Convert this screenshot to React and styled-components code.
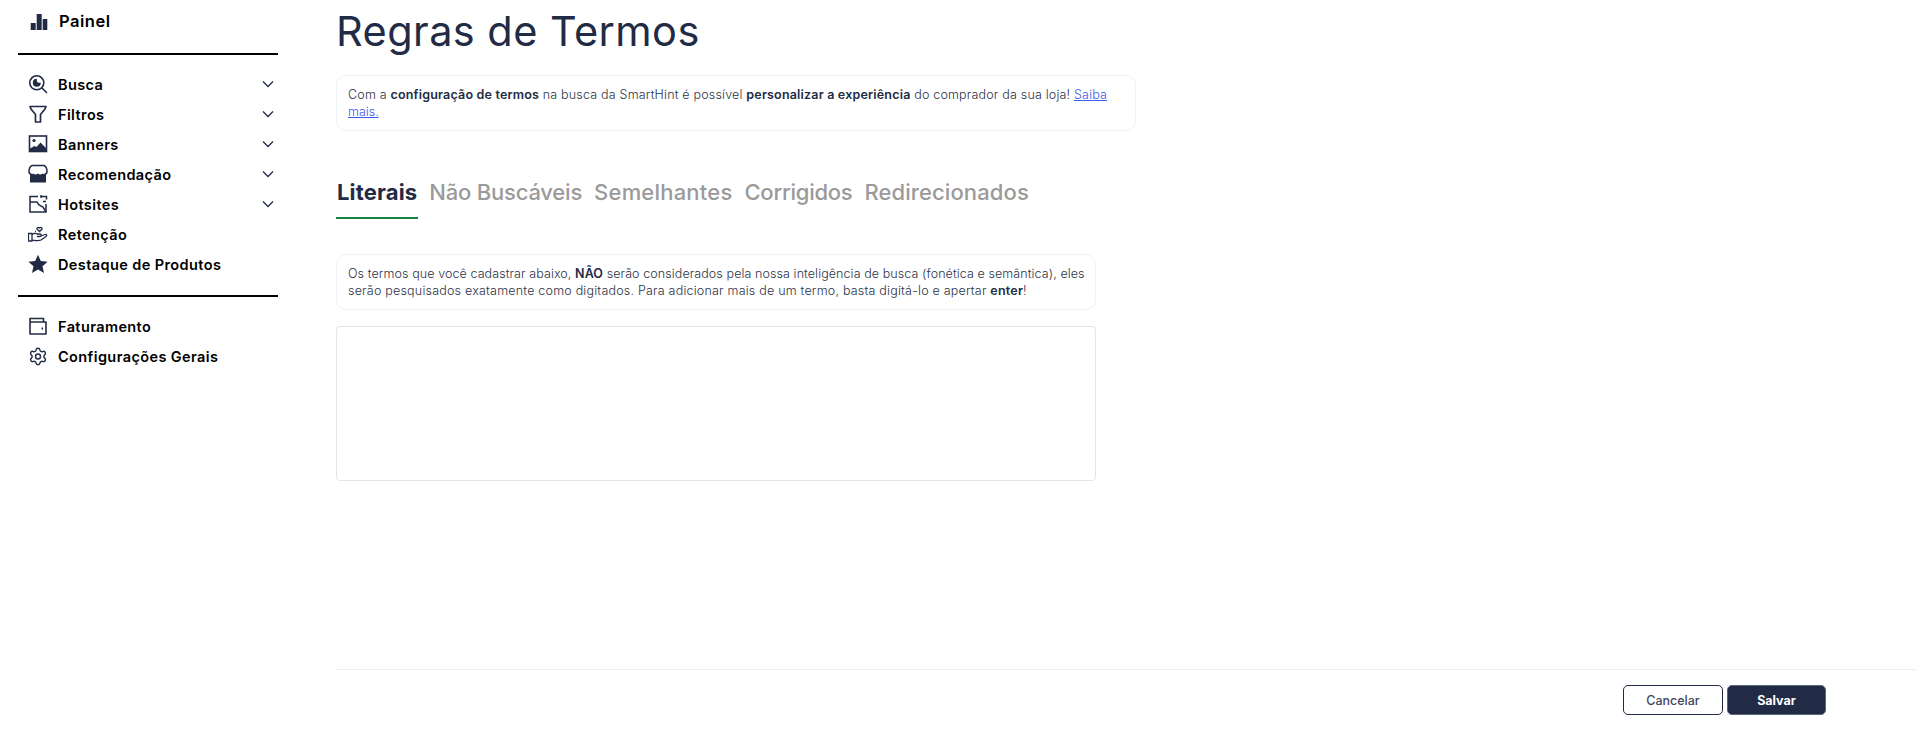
import React from "react";
import styled, { createGlobalStyle } from "styled-components";
import { Settings } from "lucide-react";

const navy = "#222b45";

const GlobalStyle = createGlobalStyle`
  html, body {
    margin: 0;
    padding: 0;
    background: #fff;
    font-family: "Inter", "Liberation Sans", sans-serif;
  }
`;

// icons
const IconBars = () => (
  <svg width="20" height="20" viewBox="0 0 20 20" fill={navy}>
    <rect x="1.7" y="12" width="5" height="7" />
    <rect x="7.700" y="3" width="5" height="16" />
    <rect x="13.700" y="8" width="4.600" height="11" />
  </svg>
);

const IconSearch = () => (
  <svg width="20" height="20" viewBox="0 0 20 20" fill="none" stroke={navy} strokeWidth="1.6">
    <circle cx="8.800" cy="8.800" r="7" />
    <path d="M8.800 4.800a4 4 0 1 0 4 4h-2a2 2 0 0 1-2-2z" fill={navy} stroke="none" />
    <path d="M14 14l4.500 4.500" strokeLinecap="round" />
  </svg>
);

const IconFilter = () => (
  <svg width="20" height="20" viewBox="0 0 20 20" fill="none" stroke={navy} strokeWidth="1.7">
    <path d="M2 2.500h16l-1 2.500-4.500 5.500v7.500h-5v-7.500L3 5z" strokeLinejoin="round" />
  </svg>
);

const IconImage = () => (
  <svg width="20" height="20" viewBox="0 0 20 20" fill="none" stroke={navy} strokeWidth="1.600">
    <rect x="1.500" y="2" width="17" height="15.500" />
    <circle cx="6" cy="6.500" r="1.600" fill={navy} stroke="none" />
    <path d="M2 17v-2.500l4.500-2.500 2 1 4-4.500 5.500 5.500v3z" fill={navy} stroke="none" />
  </svg>
);

const IconStore = () => (
  <svg width="20" height="20" viewBox="0 0 20 20" fill={navy}>
    <path d="M4 1.500h12c2 1 3 3.500 3 6 0 1.500-1 2.500-2.300 2.500M4 1.500c-2 1-3 3.500-3 6 0 1.500 1 2.500 2.300 2.500" fill="none" stroke={navy} strokeWidth="1.500" />
    <path d="M2 9.500c1.200.8 2.500.8 3.300 0 .9.900 2.100 1.100 3.200.7.600-.2 1-.4 1.500-.7.900.9 2.100 1.100 3.200.7.500-.2.900-.4 1.500-.7.800.8 2 .8 3.300 0v9H2z" />
  </svg>
);

const IconHotsite = () => (
  <svg width="20" height="20" viewBox="0 0 20 20" fill="none" stroke={navy} strokeWidth="1.500">
    <path d="M10 2.500H2v15.500h16V10" />
    <path d="M13 1v3M13 2.500h5.500v3" />
    <path d="M2 8h7l2 3 4 2 3 5" />
    <path d="M15 7.500h3" />
  </svg>
);

const IconHand = () => (
  <svg width="20" height="20" viewBox="0 0 20 20" fill="none" stroke={navy} strokeWidth="1.300">
    <path d="M11.500 7.500L9.200 5.300c-1-1.200.8-2.700 2.300-1.300 1.500-1.400 3.300.1 2.300 1.300z" />
    <path d="M.5 9.500h3.500v7.500H.5z" />
    <path d="M4 10.500c2-1.500 3.500-1.500 5-.5h3c1.500 0 1.500 2.500 0 2.500H9M13 12l4-1.500c1.500-.5 2.500 1 1 2l-5 3.500c-2 1-5 .5-9 .2" strokeLinejoin="round" />
    <path d="M7 7.500h1" />
  </svg>
);

const IconStar = () => (
  <svg width="20" height="20" viewBox="0 0 20 20" fill={navy}>
    <path d="M10 .8l2.800 6.300 6.800.7-5.100 4.500 1.500 6.700L10 15.500 4 19l1.500-6.700L.4 7.800l6.800-.7z" />
  </svg>
);

const IconWallet = () => (
  <svg width="20" height="20" viewBox="0 0 20 20" fill="none" stroke={navy} strokeWidth="1.600">
    <path d="M2 6V18h16V6H2zM2 6V2.500h13.500V6" strokeLinejoin="round" />
    <path d="M13.500 12.500h1.500" strokeWidth="2" />
  </svg>
);

const Chevron = () => (
  <svg width="12" height="8" viewBox="0 0 12 8" fill="none" stroke={navy} strokeWidth="1.300">
    <path d="M1 1.500l5 5 5-5" />
  </svg>
);

const mainItems = [
  { label: "Busca", icon: <IconSearch />, arrow: true },
  { label: "Filtros", icon: <IconFilter />, arrow: true },
  { label: "Banners", icon: <IconImage />, arrow: true },
  { label: "Recomendação", icon: <IconStore />, arrow: true },
  { label: "Hotsites", icon: <IconHotsite />, arrow: true },
  { label: "Retenção", icon: <IconHand /> },
  { label: "Destaque de Produtos", icon: <IconStar /> },
];

const extraItems = [
  { label: "Faturamento", icon: <IconWallet /> },
  { label: "Configurações Gerais", icon: <Settings size={21} color={navy} strokeWidth={1.7} /> },
];

const tabs = [
  { label: "Literais", spacing: 0.15 },
  { label: "Não Buscáveis", spacing: -0.2 },
  { label: "Semelhantes", spacing: 0.2 },
  { label: "Corrigidos", spacing: -0.25 },
  { label: "Redirecionados", spacing: 0.1 },
];

const App = () => {
  const renderItem = (item) => (
    <NavItem key={item.label}>
      <NavIcon>{item.icon}</NavIcon>
      <NavLabel>{item.label}</NavLabel>
      {item.arrow && <Chevron />}
    </NavItem>
  );

  return (
    <Page>
      <GlobalStyle />
      <Sidebar>
        <Brand>
          <IconBars />
          <BrandLabel>Painel</BrandLabel>
        </Brand>
        <Divider />
        <NavGroup>{mainItems.map(renderItem)}</NavGroup>
        <Divider />
        <NavGroup>{extraItems.map(renderItem)}</NavGroup>
      </Sidebar>
      <Main>
        <Content>
          <Title>Regras de Termos</Title>
          <Notice $width={800}>
            <Line $spacing={0.19}>
              Com a <b>configuração de termos</b> na busca da SmartHint é possível{" "}
              <b>personalizar a experiência</b> do comprador da sua loja! <a href="#saiba">Saiba</a>
            </Line>
            <Line><a href="#saiba">mais.</a></Line>
          </Notice>
          <Tabs>
            {tabs.map((tab, i) => (
              <Tab key={tab.label} $active={i === 0} $spacing={tab.spacing}>{tab.label}</Tab>
            ))}
          </Tabs>
          <Notice $width={760}>
            <Line $spacing={0.09}>
              Os termos que você cadastrar abaixo, <b>NÃO</b> serão considerados pela nossa inteligência de busca (fonética e semântica), eles
            </Line>
            <Line $spacing={0.21}>
              serão pesquisados exatamente como digitados. Para adicionar mais de um termo, basta digitá-lo e apertar <b>enter</b>!
            </Line>
          </Notice>
          <TermsBox />
        </Content>
        <Footer>
          <CancelButton>Cancelar</CancelButton>
          <SaveButton>Salvar</SaveButton>
        </Footer>
      </Main>
    </Page>
  );
};

const Page = styled.div`
  display: flex;
  height: 731px;
  overflow: hidden;
  color: ${navy};
`;

const Sidebar = styled.aside`
  width: 336px;
  flex-shrink: 0;
  box-sizing: border-box;
  padding: 11px 58px 0 18px;
`;

const Brand = styled.div`
  display: flex;
  align-items: center;
  gap: 10px;
  height: 20px;
  padding-left: 11px;
  margin-bottom: 22px;
`;

const BrandLabel = styled.span`
  font-size: 16.500px;
  font-weight: 600;
  letter-spacing: 0.5px;
  color: #000;
`;

const Divider = styled.hr`
  height: 2px;
  margin: 0;
  border: none;
  background: #000;
`;

const NavGroup = styled.nav`
  display: flex;
  flex-direction: column;
  padding: 14px 0 16px;
`;

const NavItem = styled.div`
  display: flex;
  align-items: center;
  height: 30px;
  padding: 0 4px 0 10px;
`;

const NavIcon = styled.span`
  display: flex;
  width: 20px;
  margin-right: 10px;
`;

const NavLabel = styled.span`
  flex: 1;
  font-size: 14.500px;
  font-weight: 600;
  color: #000;
  letter-spacing: 0.4px;
`;

const Main = styled.main`
  flex: 1;
  display: flex;
  flex-direction: column;
  min-width: 0;
`;

const Content = styled.div`
  flex: 1;
`;

const Title = styled.h1`
  margin: 6px 0 18px;
  font-size: 41.500px;
  line-height: 51px;
  font-weight: 400;
  letter-spacing: 0.44px;
  color: ${navy};
`;

const Notice = styled.div`
  width: ${(p) => p.$width}px;
  box-sizing: border-box;
  padding: 10px 11px;
  border: 1px solid #eef1f6;
  border-radius: 10px;
  font-size: 12.500px;
  line-height: 17px;
  font-weight: 300;
  color: #2c3348;
  white-space: nowrap;

  b {
    font-weight: 600;
    color: ${navy};
  }

  a {
    color: #3b5bf0;
  }
`;

const Line = styled.div`
  letter-spacing: ${(p) => p.$spacing || 0}px;
`;

const Tabs = styled.div`
  display: flex;
  gap: 10px;
  margin: 47px 0 35px;
`;

const Tab = styled.div`
  padding: 0 1px 11px;
  font-size: 22px;
  line-height: 28px;
  font-weight: ${(p) => (p.$active ? 700 : 500)};
  letter-spacing: ${(p) => p.$spacing}px;
  color: ${(p) => (p.$active ? navy : "#9a9a9a")};
  border-bottom: 2px solid ${(p) => (p.$active ? "#14833f" : "transparent")};
`;

const TermsBox = styled.div`
  width: 760px;
  height: 155px;
  box-sizing: border-box;
  margin-top: 16px;
  border: 1px solid #e4e5e8;
  border-radius: 4px;
`;

const Footer = styled.footer`
  display: flex;
  justify-content: flex-end;
  gap: 4px;
  height: 62px;
  box-sizing: border-box;
  padding: 15px 90px 0 0;
  border-top: 1px solid #eeeeee;
`;

const CancelButton = styled.button`
  width: 100px;
  height: 30px;
  border: 1px solid ${navy};
  border-radius: 5px;
  background: #fff;
  font-family: inherit;
  font-size: 12.500px;
  font-weight: 500;
  color: #3f4760;
`;

const SaveButton = styled(CancelButton)`
  width: 99px;
  background: ${navy};
  border-color: #5a6480;
  font-weight: 700;
  color: #fff;
`;

export default App;
